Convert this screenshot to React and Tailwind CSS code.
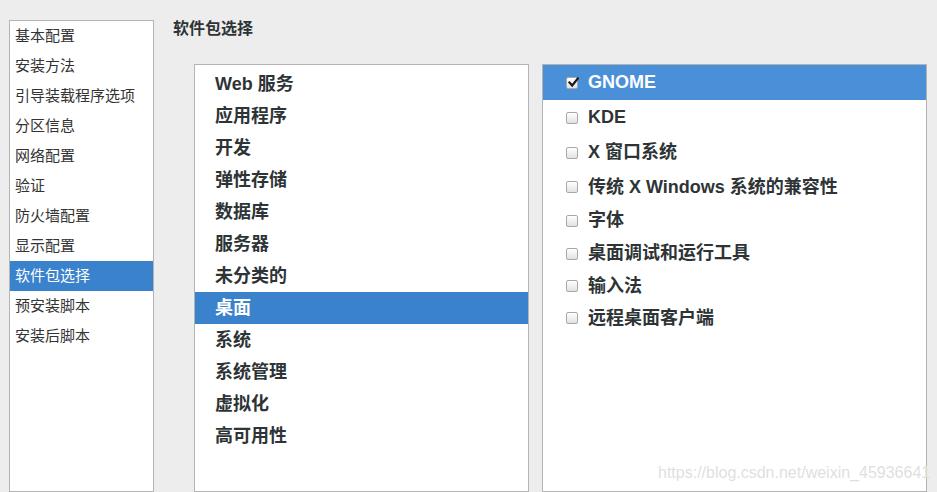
import React from "react";

const FONT = { fontFamily: '"Liberation Sans","Noto Sans CJK SC",sans-serif' };

const leftItems = ["基本配置","安装方法","引导装载程序选项","分区信息","网络配置","验证","防火墙配置","显示配置","软件包选择","预安装脚本","安装后脚本"];
const midItems = ["Web 服务","应用程序","开发","弹性存储","数据库","服务器","未分类的","桌面","系统","系统管理","虚拟化","高可用性"];
const rightItems = [
  ["GNOME", 35, true],
  ["KDE", 35, false],
  ["X 窗口系统", 35, false],
  ["传统 X Windows 系统的兼容性", 34, false],
  ["字体", 33, false],
  ["桌面调试和运行工具", 33, false],
  ["输入法", 32, false],
  ["远程桌面客户端", 32, false],
];

function Box({ checked }) {
  return (
    <div className="w-[12px] h-[12px] rounded-[2px] border border-[#a8a8a8] bg-gradient-to-b from-white to-[#e2e2e2] relative shrink-0">
      {checked && (
        <svg className="absolute left-[1px] top-[-1px]" width="11" height="11" viewBox="0 0 11 11">
          <path d="M1.5 5.5 L4.2 8.5 L9.8 1.5" fill="none" stroke="#1a1a1a" strokeWidth="2.2" strokeLinecap="square" />
        </svg>
      )}
    </div>
  );
}

export default function App() {
  return (
    <div className="w-[937px] h-[492px] bg-[#ededed] flex items-start overflow-hidden relative" style={FONT}>
      <div className="ml-[9px] mt-[20px] w-[145px] h-[472px] border border-[#b4b4b4] bg-white">
        {leftItems.map((t) => (
          <div
            key={t}
            className={`h-[30px] leading-[30px] pl-[5px] text-[15px] ${t === "软件包选择" ? "bg-[#3a82cc] text-white" : "text-[#333]"}`}
          >
            {t}
          </div>
        ))}
      </div>
      <div className="flex-1 flex flex-col pl-[19px] pt-[20px]">
        <div className="h-[18px] leading-[18px] text-[16px] font-bold text-[#2e3436]">软件包选择</div>
        <div className="mt-[26px] ml-[21px] flex gap-[13px]">
          <div className="w-[335px] h-[428px] border border-[#b4b4b4] bg-white pt-[3px]">
            {midItems.map((t) => (
              <div
                key={t}
                className={`h-[32px] leading-[32px] pl-[20px] text-[18px] font-bold ${t === "桌面" ? "bg-[#3a82cc] text-white" : "text-[#2e3436]"}`}
              >
                {t}
              </div>
            ))}
          </div>
          <div className="w-[385px] h-[428px] border border-[#b4b4b4] bg-white">
            {rightItems.map(([t, h, sel]) => (
              <div
                key={t}
                style={{ height: h }}
                className={`flex items-center pl-[23px] gap-[10px] text-[18px] font-bold ${sel ? "bg-[#4a90d9] text-white" : "text-[#2e3436]"}`}
              >
                <Box checked={sel} />
                <span>{t}</span>
              </div>
            ))}
          </div>
        </div>
      </div>
      <div className="absolute left-[658px] top-[462px] text-[16px] text-[#dfdfdf] leading-[22px] whitespace-nowrap" style={{ fontFamily: '"Liberation Sans",sans-serif' }}>
        https://blog.csdn.net/weixin_45936641
      </div>
    </div>
  );
}
